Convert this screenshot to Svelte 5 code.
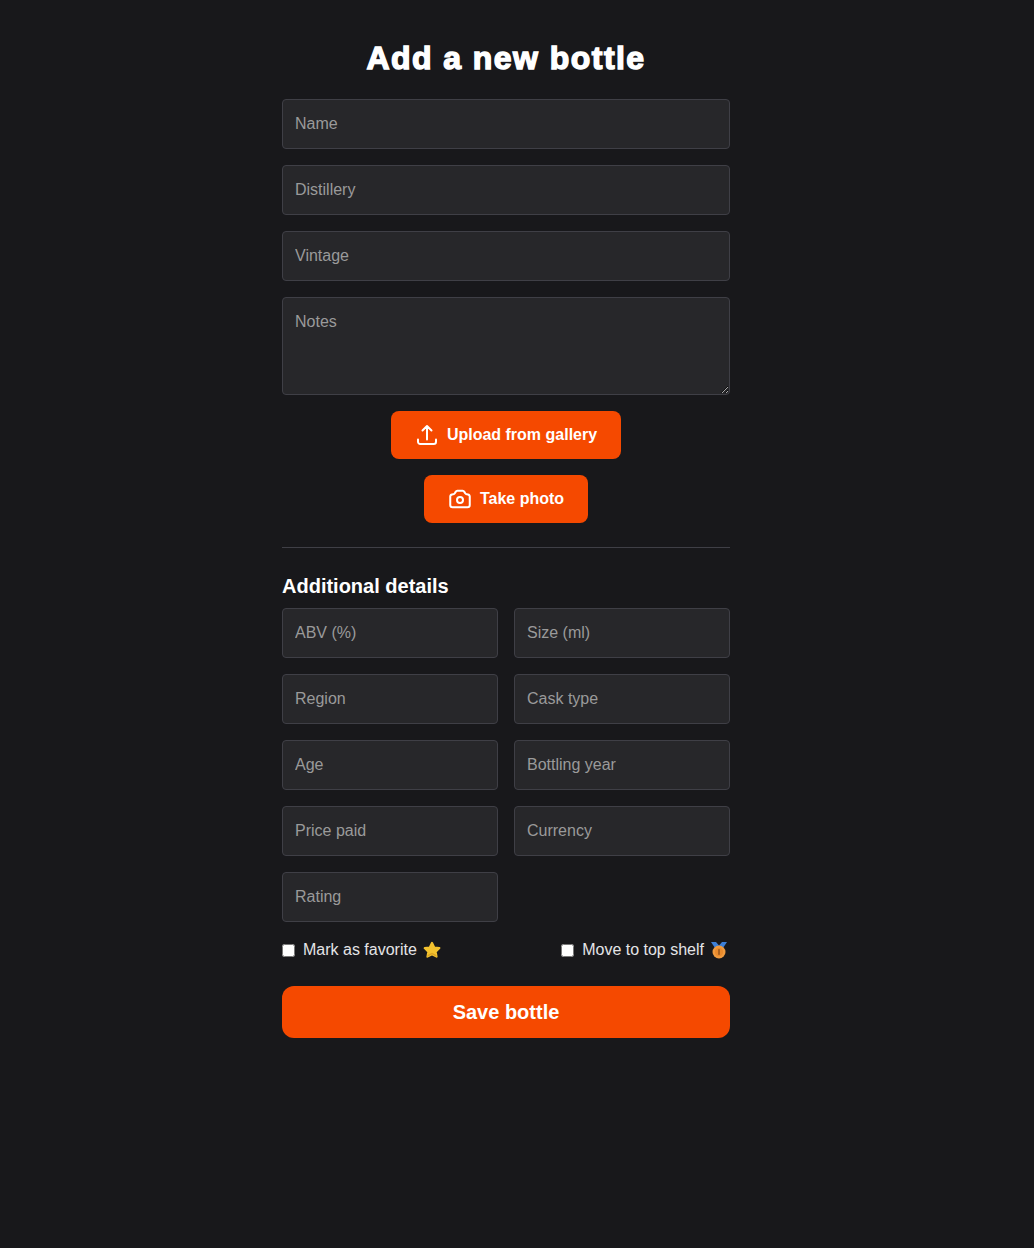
<script>
    const mainFields = ["Name", "Distillery", "Vintage"];
    const detailFields = [
        "ABV (%)",
        "Size (ml)",
        "Region",
        "Cask type",
        "Age",
        "Bottling year",
        "Price paid",
        "Currency",
        "Rating",
    ];
</script>

<div class="page">
    <form class="form" onsubmit={(e) => e.preventDefault()}>
        <h1>Add a new bottle</h1>

        {#each mainFields as field}
            <input type="text" placeholder={field} />
        {/each}
        <textarea placeholder="Notes"></textarea>

        <button type="button" class="action">
            <svg viewBox="0 0 24 24" width="24" height="24" fill="none" stroke="currentColor" stroke-width="2" stroke-linecap="round" stroke-linejoin="round">
                <path d="M3 16.5v2.25A2.25 2.25 0 0 0 5.25 21h13.5A2.25 2.25 0 0 0 21 18.75V16.5m-13.5-9L12 3m0 0 4.5 4.5M12 3v13.5" />
            </svg>
            Upload from gallery
        </button>
        <button type="button" class="action">
            <svg viewBox="0 0 24 24" width="24" height="24" fill="none" stroke="currentColor" stroke-width="2" stroke-linecap="round" stroke-linejoin="round">
                <path d="M6.827 6.175A2.31 2.31 0 0 1 5.186 7.23c-.38.054-.757.112-1.134.175C2.999 7.58 2.25 8.507 2.25 9.574V18a2.25 2.25 0 0 0 2.25 2.25h15A2.25 2.25 0 0 0 21.75 18V9.574c0-1.067-.75-1.994-1.802-2.169a47.865 47.865 0 0 0-1.134-.175 2.31 2.31 0 0 1-1.64-1.055l-.822-1.316a2.192 2.192 0 0 0-1.736-1.039 48.774 48.774 0 0 0-5.232 0 2.192 2.192 0 0 0-1.736 1.039l-.821 1.316Z" />
                <circle cx="12" cy="13" r="3" />
            </svg>
            Take photo
        </button>

        <hr />

        <h2>Additional details</h2>
        <div class="grid">
            {#each detailFields as field}
                <input type="text" placeholder={field} />
            {/each}
        </div>

        <div class="checks">
            <label>
                <input type="checkbox" />
                <span>Mark as favorite</span>
                <svg class="emoji" viewBox="0 0 22 22" width="22" height="22" aria-hidden="true">
                    <path d="M11 3.8l2.3 4.6 5.1.7-3.7 3.6.9 5-4.6-2.4-4.6 2.4.9-5-3.7-3.6 5.1-.7z" fill="#f3c22f" stroke="#f3c22f" stroke-width="2" stroke-linejoin="round" />
                    <path d="M11 15.3l-4.6 2.4.3-1.7 4.3-2.2 4.3 2.2.3 1.7z" fill="#dba322" />
                </svg>
            </label>
            <label>
                <input type="checkbox" />
                <span>Move to top shelf</span>
                <svg class="emoji" viewBox="0 0 22 22" width="22" height="22" aria-hidden="true">
                    <path d="M3 3h5l3 3.5L14 3h5l-5 7.5H8z" fill="#3d7fd6" />
                    <circle cx="11" cy="13" r="6.5" fill="#f09a3e" />
                    <circle cx="11" cy="13" r="4.2" fill="#e98a2c" />
                    <rect x="10" y="10.2" width="2" height="5.6" fill="#a9601f" />
                </svg>
            </label>
        </div>

        <button type="submit" class="save">Save bottle</button>
    </form>
</div>

<style>
    :global(body) {
        background: #18181b;
        font-family: "Liberation Sans", Arial, sans-serif;
    }

    .page {
        min-height: 1248px;
        box-sizing: border-box;
        padding: 0 22px 0 0;
        background: #18181b;
    }

    .form {
        width: 448px;
        margin: 0 auto;
        padding-top: 40px;
        display: flex;
        flex-direction: column;
        gap: 16px;
    }

    h1 {
        margin: 0 0 6px;
        color: #fff;
        font-size: 32px;
        line-height: 37px;
        font-weight: 900;
        text-align: center;
        -webkit-text-stroke: 1.4px #fff;
        letter-spacing: 1.45px;
    }

    h2 {
        margin: 0 0 -8px;
        color: #fff;
        font-size: 20px;
        line-height: 28px;
        font-weight: 700;
    }

    input[type="text"],
    textarea {
        display: block;
        width: 100%;
        box-sizing: border-box;
        height: 50px;
        padding: 12px;
        background: #27272a;
        border: 1px solid #3f3f46;
        border-radius: 4px;
        color: #fff;
        font: 16px/24px "Liberation Sans", Arial, sans-serif;
        outline: none;
    }

    textarea {
        height: 98px;
    }

    input::placeholder,
    textarea::placeholder {
        color: #9a9a9a;
        opacity: 1;
    }

    .action {
        align-self: center;
        display: flex;
        align-items: center;
        gap: 8px;
        height: 48px;
        padding: 0 24px;
        background: #f54900;
        border: 0;
        border-radius: 8px;
        color: #fff;
        font: 700 16px/24px "Liberation Sans", Arial, sans-serif;
    }

    hr {
        width: 100%;
        margin: 8px 0;
        border: 0;
        border-top: 1px solid #3f3f46;
    }

    .grid {
        display: grid;
        grid-template-columns: 1fr 1fr;
        gap: 16px;
    }

    .checks {
        display: flex;
        justify-content: space-between;
        align-items: center;
        height: 24px;
        margin-bottom: 8px;
    }

    label {
        display: flex;
        align-items: center;
        gap: 8px;
        color: #e4e4e7;
        font-size: 16px;
    }

    label input {
        width: 13px;
        height: 13px;
        margin: 0;
    }

    .emoji {
        margin-left: -4px;
    }

    .save {
        height: 52px;
        background: #f54900;
        border: 0;
        border-radius: 12px;
        color: #fff;
        font: 700 20px/28px "Liberation Sans", Arial, sans-serif;
    }
</style>
